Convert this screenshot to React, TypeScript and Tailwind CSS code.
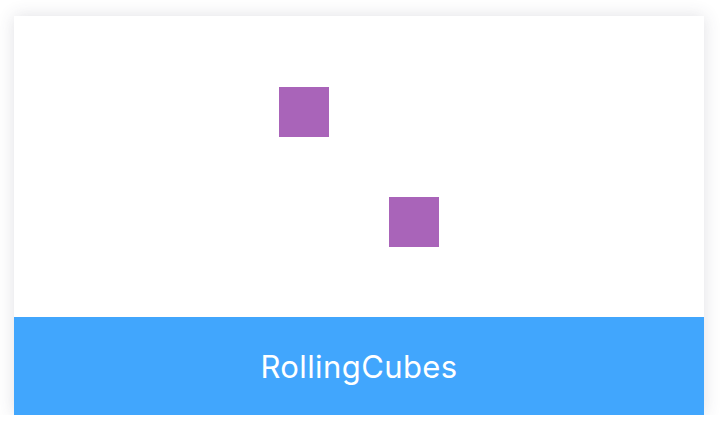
export default function App() {
  return (
    <div className="w-[720px] h-[432px] bg-white" style={{ fontFamily: 'Inter, "Liberation Sans", Arial, sans-serif' }}>
      <div className="h-[415px] overflow-hidden pt-[16px] pl-[14px] pr-[16px]">
        <div className="h-[399px] bg-white flex flex-col shadow-[0_0_16px_rgba(60,60,90,0.16)]">
          <div className="relative flex-1">
            <div className="absolute left-[265px] top-[71px] w-[50px] h-[50px] bg-[#a964b9]" />
            <div className="absolute left-[375px] top-[181px] w-[50px] h-[50px] bg-[#a964b9]" />
          </div>
          <div className="h-[98px] bg-[#41a6fd] flex items-center justify-center">
            <span className="text-white text-[31px] tracking-[0.4px] leading-none">RollingCubes</span>
          </div>
        </div>
      </div>
    </div>
  );
}
